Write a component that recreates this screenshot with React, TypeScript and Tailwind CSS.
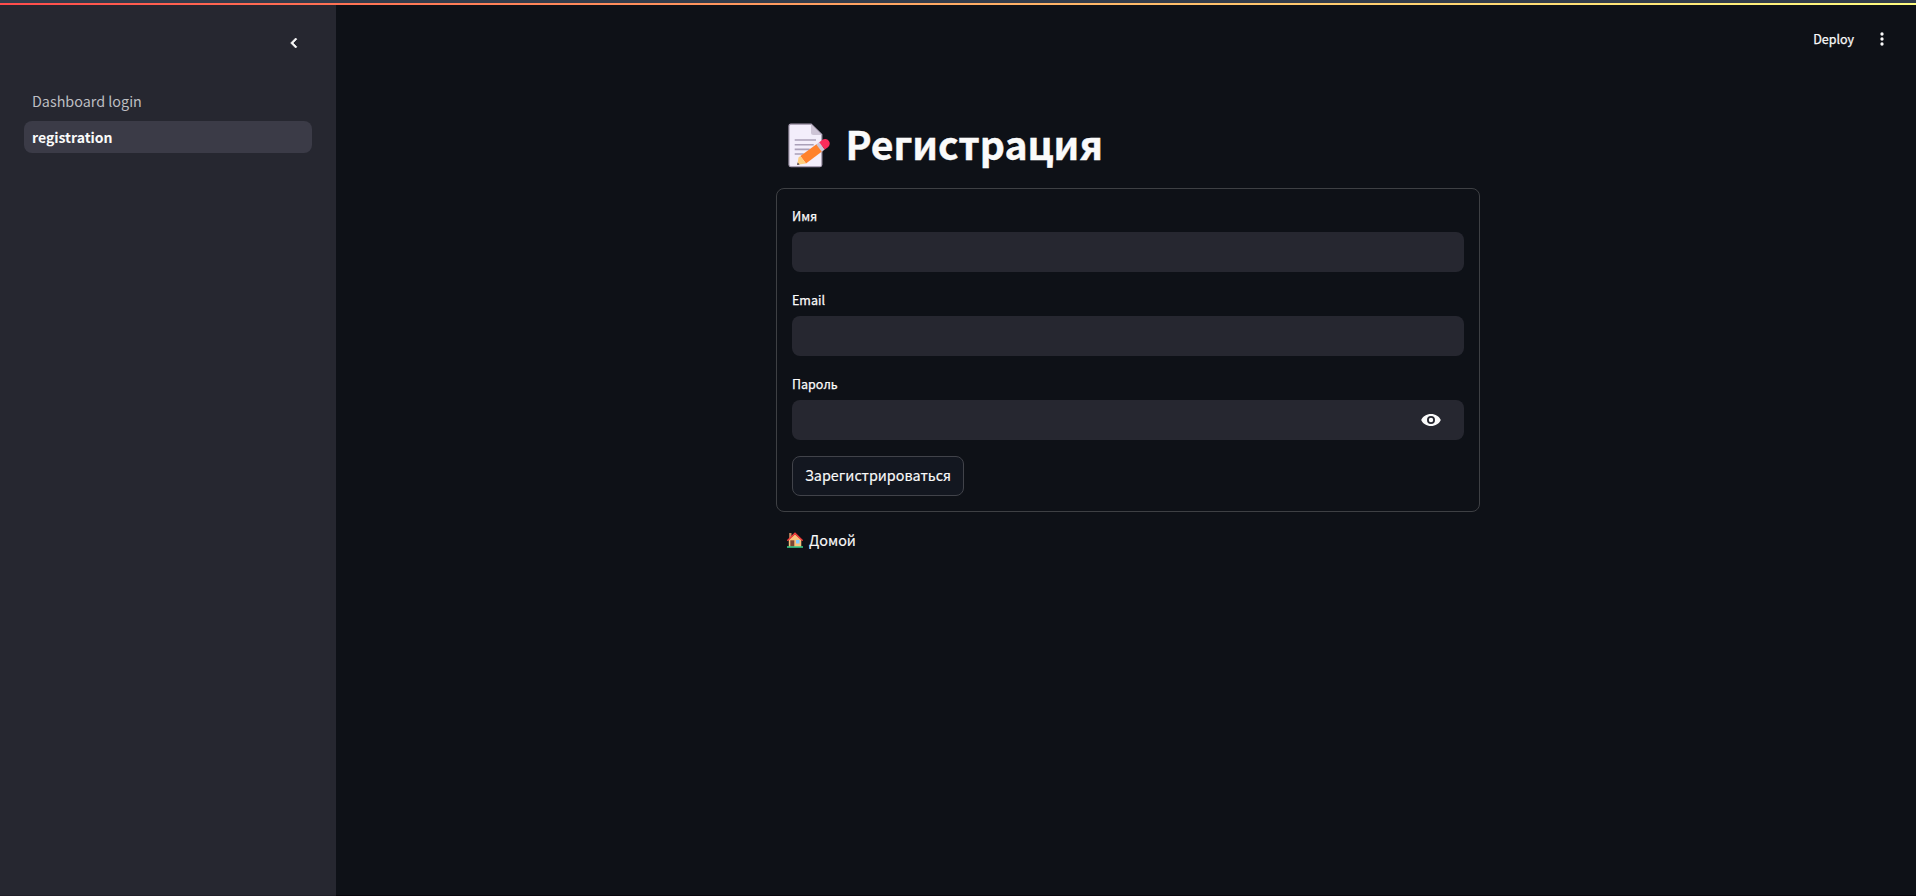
import React from "react";

function MemoIcon() {
  return (
    <svg className="block h-[46px] w-[42px]" viewBox="0 0 42 46">
      <path d="M2.800 2.200h20.400L33.800 12.600v30.200a1.800 1.800 0 0 1-1.800 1.800H2.800A1.800 1.800 0 0 1 1 42.800V4a1.800 1.800 0 0 1 1.800-1.800z" fill="#f3eefb" stroke="#aaa0b4" strokeWidth="1.200" />
      <path d="M23 2.200l10.900 10.800H25.500A2.500 2.500 0 0 1 23 10.500z" fill="#cdc4d6" />
      <path d="M6.700 18h21.300M6.700 22.800h19M6.700 27.400h15M6.700 32h9" stroke="#aaa0b8" strokeWidth="1.600" />
      <path d="M28.800 22l5.500 7.300L18 41.500 12.400 34z" fill="#ff822d" />
      <path d="M12.400 34l5.600 7.500-8.700 1.200 1.200-7.200z" fill="#ffce7c" />
      <path d="M9.600 40.500l2 2-2.500.4z" fill="#433b4b" />
      <path d="M28.300 22.400l3-2.300 5.500 7.300-3 2.300z" fill="#cdc4d6" />
      <path d="M31.200 20.200l3-2.200a4 4 0 0 1 5.800 7.200l-3.200 2.300z" fill="#fa2b5b" />
    </svg>
  );
}

function HouseIcon() {
  return (
    <svg className="block h-4 w-4" viewBox="0 0 16 16">
      <path d="M2.200 1h2.300v5H2.200z" fill="#c98d62" />
      <path d="M1.800 7.800L8 2.200l6.300 5.600V15H1.800z" fill="#f9c27b" />
      <path d="M3.300 8.300h4V15h-4z" fill="#7d4533" />
      <path d="M9 7.900h3.500v3.600H9z" fill="#83cbff" />
      <path d="M.8 8.200L8 1.400l7.200 6.800" fill="none" stroke="#f23b3b" strokeWidth="1.500" strokeLinecap="round" />
      <path d="M0 14.200h16v1.600H0z" fill="#3ac98a" />
    </svg>
  );
}

function Field({ label, children }: { label: string; children?: React.ReactNode }) {
  return (
    <label className="flex flex-col">
      <span className="h-7 text-[12.500px] leading-6 [-webkit-text-stroke:0.25px]">{label}</span>
      <span className="flex h-10 items-center justify-end rounded-lg bg-[#262730] pr-[21px]">{children}</span>
    </label>
  );
}

export default function App() {
  return (
    <div className="flex h-[896px] w-full flex-col overflow-hidden bg-[#0e1117] font-['Noto_Sans_CJK_SC',sans-serif] text-[#fafafa]">
      <div className="h-[3px] shrink-0 bg-[#323c4b]" />
      <div className="h-[2px] shrink-0 bg-linear-to-r from-[#ff4b4b] to-[#fffd80]" />
      <div className="flex min-h-0 flex-1">
        <aside className="flex w-[336px] shrink-0 flex-col border-b border-[#211f28] bg-[#262730] px-6">
          <div className="flex h-20 justify-end pt-7 pr-2">
            <svg className="h-5 w-5" viewBox="0 0 24 24" fill="#fafafa" stroke="#fafafa" strokeWidth="0.800">
              <path d="M15.410 7.410L14 6l-6 6 6 6 1.410-1.410L10.830 12z" />
            </svg>
          </div>
          <nav className="flex flex-col gap-1">
            <a className="flex h-8 items-center rounded-lg px-2 text-[14.350px] text-[#bdbec2]">Dashboard login</a>
            <a className="flex h-8 items-center rounded-lg bg-[#3b3b47] px-2 text-[14px] font-bold">registration</a>
          </nav>
        </aside>
        <main className="flex flex-1 flex-col border-b border-[#08050c]">
          <header className="flex h-[68px] items-center justify-end gap-[18px] pr-[24px]">
            <span className="text-[12.500px] [-webkit-text-stroke:0.25px]">Deploy</span>
            <svg className="h-5 w-5" viewBox="0 0 24 24" fill="#fafafa">
              <circle cx="12" cy="6" r="2" />
              <circle cx="12" cy="12" r="2" />
              <circle cx="12" cy="18" r="2" />
            </svg>
          </header>
          <section className="ml-[440px] flex w-[704px] flex-col">
            <h1 className="flex h-[115px] items-start pt-[49px] pl-[12px]">
              <MemoIcon />
              <span className="ml-[15.500px] text-[39.200px] leading-[42px] font-bold [-webkit-text-stroke:0.4px]">Регистрация</span>
            </h1>
            <form className="flex h-[324px] flex-col gap-4 rounded-lg border border-[#3e4044] px-[15px] pt-[15px]">
              <Field label="Имя" />
              <Field label="Email" />
              <Field label="Пароль">
                <svg className="h-6 w-6" viewBox="0 0 24 24" fill="#fafafa">
                  <path d="M12 6c-4.500 0-8.300 2.500-9.800 6 1.500 3.500 5.300 6 9.800 6s8.300-2.500 9.800-6c-1.500-3.500-5.300-6-9.800-6zm0 10a4 4 0 1 1 0-8 4 4 0 0 1 0 8zm0-6.200a2.200 2.200 0 1 0 0 4.400 2.200 2.200 0 0 0 0-4.400z" />
                </svg>
              </Field>
              <button type="button" className="flex h-10 w-[172px] items-center justify-center rounded-lg border border-[#41434a] bg-[#131720] pb-0.5 text-[14.350px] whitespace-nowrap [-webkit-text-stroke:0.15px]">Зарегистрироваться</button>
            </form>
            <a className="flex h-14 items-center gap-[6px] pl-[11px] text-[14.350px] [-webkit-text-stroke:0.15px]">
              <HouseIcon />
              <span>Домой</span>
            </a>
          </section>
        </main>
      </div>
    </div>
  );
}
